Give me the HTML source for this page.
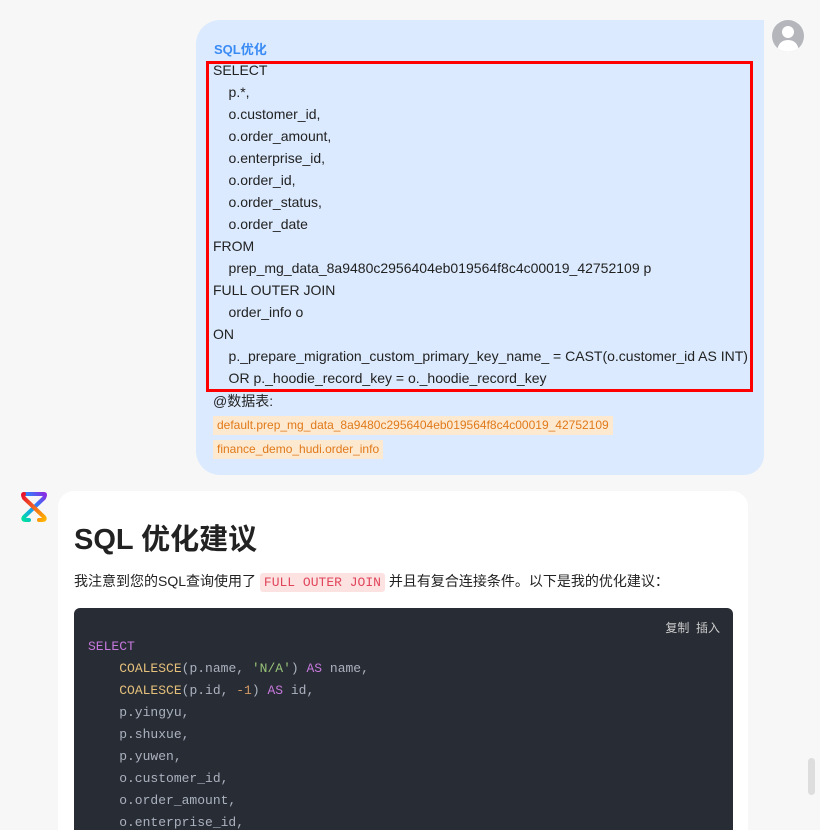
<!DOCTYPE html>
<html><head><meta charset="utf-8"><style>
*{margin:0;padding:0;box-sizing:border-box}
html,body{width:820px;height:830px;overflow:hidden}
body{background:#f7f7f7;font-family:"Liberation Sans","Noto Sans CJK SC",sans-serif;position:relative;color:#222}
.bubble{position:absolute;left:196px;top:20px;width:568px;height:455px;background:#dbeafe;border-radius:24px 0 20px 24px}
.title{position:absolute;left:18px;top:19px;font-size:13px;font-weight:bold;color:#3b8bf5}
.red{position:absolute;left:10px;top:41px;width:547px;height:331px;border:3px solid #f00}
.sql{position:absolute;left:17px;top:39px;font-size:14px;line-height:22px;color:#222;white-space:pre}
.ds{position:absolute;left:17px;top:371px;font-size:14px}
.tag{position:absolute;left:17px;font-size:12px;color:#e07a1a;background:#fde8d0;padding:1px 4px;line-height:17px}
.avatar{position:absolute;left:772px;top:20px;width:32px;height:32px;border-radius:50%;background:#b4b6bb;overflow:hidden}
.card{position:absolute;left:58px;top:491px;width:690px;height:339px;background:#fff;border-radius:16px 16px 0 0;overflow:hidden}
h1{position:absolute;left:16px;top:25px;font-size:29px;font-weight:bold;color:#222}
.p{position:absolute;left:16px;top:80px;font-size:14px;color:#222;white-space:nowrap}
.ic{font-family:"Liberation Mono",monospace;font-size:13px;color:#e0455a;background:#fde2e2;padding:2px 4px;border-radius:3px}
.code{position:absolute;left:16px;top:117px;width:659px;height:260px;background:#282c34;border-radius:6px}
.btns{position:absolute;right:13px;top:11px;font-size:12px;color:#ccc}
pre{position:absolute;left:14px;top:28px;font-family:"Liberation Mono",monospace;font-size:13px;line-height:22px;color:#abb2bf}
.k{color:#c678dd}.f{color:#e5c07b}.s{color:#98c379}.n{color:#d19a66}
.sb{position:absolute;left:808px;top:758px;width:7px;height:37px;border-radius:4px;background:#ddd}
</style></head><body>
<div class="bubble">
<div class="title">SQL优化</div>
<div class="red"></div>
<div class="sql">SELECT
    p.*,
    o.customer_id,
    o.order_amount,
    o.enterprise_id,
    o.order_id,
    o.order_status,
    o.order_date
FROM
    prep_mg_data_8a9480c2956404eb019564f8c4c00019_42752109 p
FULL OUTER JOIN
    order_info o
ON
    p._prepare_migration_custom_primary_key_name_ = CAST(o.customer_id AS INT)
    OR p._hoodie_record_key = o._hoodie_record_key</div>
<div class="ds">@数据表:</div>
<div class="tag" style="top:396px">default.prep_mg_data_8a9480c2956404eb019564f8c4c00019_42752109</div>
<div class="tag" style="top:420px">finance_demo_hudi.order_info</div>
</div>
<div class="avatar"><svg width="32" height="32"><circle cx="16" cy="12" r="6" fill="#fff"/><path d="M5 32 Q6 20 16 20 Q26 20 27 32Z" fill="#fff"/></svg></div>
<svg style="position:absolute;left:19px;top:490px" width="30" height="34" viewBox="0 0 30 34"><defs><linearGradient id="g" x1="0" y1="0" x2="1" y2="1"><stop offset="0" stop-color="#e8112d"/><stop offset=".5" stop-color="#f26522"/><stop offset="1" stop-color="#ffb300"/></linearGradient><linearGradient id="h" x1="1" y1="0" x2="0" y2="1"><stop offset="0" stop-color="#8a2be2"/><stop offset=".5" stop-color="#1e90ff"/><stop offset="1" stop-color="#00e0a0"/></linearGradient></defs><path d="M5 4 H25 Q27 4 25 8 L5 27 Q3 30 7 30 H10" stroke="url(#h)" stroke-width="4" fill="none" stroke-linecap="round"/><path d="M5 4 Q3 4 5 8 L25 27 Q27 30 23 30 H20" stroke="url(#g)" stroke-width="4" fill="none" stroke-linecap="round"/></svg>
<div class="card">
<h1>SQL 优化建议</h1>
<div class="p">我注意到您的SQL查询使用了 <span class="ic">FULL OUTER JOIN</span> 并且有复合连接条件。以下是我的优化建议：</div>
<div class="code"><div class="btns">复制&nbsp;&nbsp;插入</div>
<pre><span class="k">SELECT</span>
    <span class="f">COALESCE</span>(p.name, <span class="s">'N/A'</span>) <span class="k">AS</span> name,
    <span class="f">COALESCE</span>(p.id, <span class="n">-1</span>) <span class="k">AS</span> id,
    p.yingyu,
    p.shuxue,
    p.yuwen,
    o.customer_id,
    o.order_amount,
    o.enterprise_id,</pre></div>
</div>
<div class="sb"></div>
</body></html>
